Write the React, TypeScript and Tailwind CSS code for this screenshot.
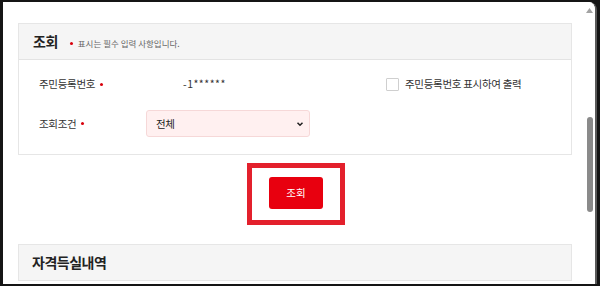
import React from 'react';

const font = { fontFamily: '"Noto Sans CJK KR", "Noto Sans", sans-serif' };

const RedDot = () => <span className="inline-block w-[3px] h-[3px] rounded-full bg-[#d8000c]" />;

const App: React.FC = () => {
  return (
    <div className="w-[600px] h-[286px] bg-[#151515] pl-[3px] pt-[2px] pr-[3px] pb-[2px] flex overflow-hidden" style={font}>
      <div className="flex-1 flex bg-white rounded-tr-[8px] border-r-2 border-[#5a5a5a] overflow-hidden">
        {/* content */}
        <div className="flex-1 pl-[15px] pt-[21px]">
          {/* 조회 panel */}
          <section className="w-[554px] border border-[#e6e6e6]">
            <div className="h-[36px] bg-[#f5f5f5] border-b border-[#e3e3e3] flex items-center px-[14px] gap-[12px]">
              <h2 className="text-[14px] font-bold text-[#222] tracking-[-0.5px]">조회</h2>
              <div className="flex items-center gap-[5px] text-[8.5px] text-[#666] pt-[3px]">
                <RedDot />
                <span>표시는 필수 입력 사항입니다.</span>
              </div>
            </div>
            <div className="pt-[10px] pb-[17px] pl-[20px] text-[10.5px] text-[#333] tracking-[-0.3px]">
              <div className="h-[28px] flex items-center">
                <div className="w-[107px] flex items-center gap-[5px]">
                  <span>주민등록번호</span>
                  <RedDot />
                </div>
                <span className="w-[240px] pl-[37px] tracking-[0.5px]">-1******</span>
                <label className="flex items-center gap-[6px]">
                  <span className="w-[13px] h-[13px] border border-[#cfcfcf] bg-white rounded-[1px]" />
                  <span>주민등록번호 표시하여 출력</span>
                </label>
              </div>
              <div className="h-[27px] mt-[12px] flex items-center">
                <div className="w-[107px] flex items-center gap-[5px]">
                  <span>조회조건</span>
                  <RedDot />
                </div>
                <div className="w-[164px] h-[27px] bg-[#fff0f0] border border-[#f6d8d8] rounded-[3px] flex items-center justify-between pl-[9px] pr-[5px] text-[#222]">
                  <span className="text-[10.5px]">전체</span>
                  <svg width="8" height="8" viewBox="0 0 8 8">
                    <path d="M1.5 2.8 L4 5.3 L6.5 2.8" fill="none" stroke="#222" strokeWidth="1.5" />
                  </svg>
                </div>
              </div>
            </div>
          </section>

          {/* button */}
          <div className="w-[554px] flex justify-center mt-[8px]">
            <div className="border-[5px] border-[#e3202c] px-[17px] pt-[9px] pb-[11px] ml-[2px]">
              <button className="w-[54px] h-[32px] bg-[#e8000f] rounded-[3px] text-white text-[10.5px] flex items-center justify-center">
                조회
              </button>
            </div>
          </div>

          {/* 자격득실내역 panel */}
          <section className="w-[554px] mt-[19px] h-[37px] bg-[#f5f5f5] border border-[#e6e6e6] flex items-center px-[13px]">
            <h2 className="text-[14px] font-bold text-[#222] tracking-[-0.5px]">자격득실내역</h2>
          </section>
        </div>

        {/* scrollbar */}
        <div className="w-[11px] flex flex-col items-center bg-white">
          <svg className="mt-[6px]" width="7" height="5" viewBox="0 0 7 5">
            <path d="M3.5 0 L7 5 L0 5 Z" fill="#a3a3a3" />
          </svg>
          <div className="mt-[104px] w-[6px] h-[95px] rounded-full bg-[#8a8a8a]" />
        </div>
      </div>
    </div>
  );
};

export default App;
